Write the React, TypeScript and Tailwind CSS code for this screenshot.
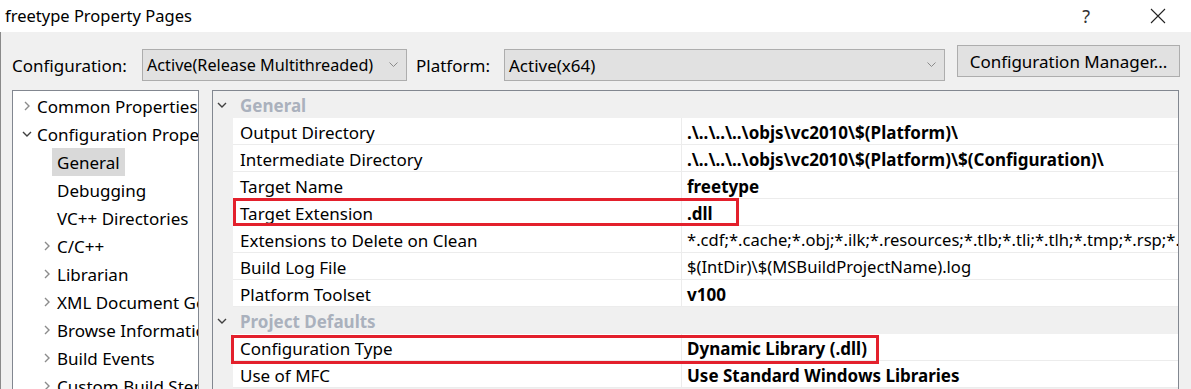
import React from 'react'

const tree = [
  { label: 'Common Properties', level: 0, chev: 'right' },
  { label: 'Configuration Properties', level: 0, chev: 'down' },
  { label: 'General', level: 1, chev: '', selected: true },
  { label: 'Debugging', level: 1, chev: '' },
  { label: 'VC++ Directories', level: 1, chev: '' },
  { label: 'C/C++', level: 1, chev: 'right' },
  { label: 'Librarian', level: 1, chev: 'right' },
  { label: 'XML Document Generator', level: 1, chev: 'right' },
  { label: 'Browse Information', level: 1, chev: 'right' },
  { label: 'Build Events', level: 1, chev: 'right' },
  { label: 'Custom Build Step', level: 1, chev: 'right' },
]

type Row =
  | { header: string }
  | { name: string; value: string; bold?: boolean; box?: 'ext' | 'type' }

const rows: Row[] = [
  { header: 'General' },
  { name: 'Output Directory', value: '.\\..\\..\\..\\objs\\vc2010\\$(Platform)\\', bold: true },
  { name: 'Intermediate Directory', value: '.\\..\\..\\..\\objs\\vc2010\\$(Platform)\\$(Configuration)\\', bold: true },
  { name: 'Target Name', value: 'freetype', bold: true },
  { name: 'Target Extension', value: '.dll', bold: true, box: 'ext' },
  { name: 'Extensions to Delete on Clean', value: '*.cdf;*.cache;*.obj;*.ilk;*.resources;*.tlb;*.tli;*.tlh;*.tmp;*.rsp;*.pgc;*.pgd;*.meta;*.tlog;*.manifest;*.res;*.pch;*.exp;*.idb;*.rep;*.xdc;*.pdb;*_manifest.rc;*.bsc;*.sbr;*.xml;*.metagen;*.bi' },
  { name: 'Build Log File', value: '$(IntDir)\\$(MSBuildProjectName).log' },
  { name: 'Platform Toolset', value: 'v100', bold: true },
  { header: 'Project Defaults' },
  { name: 'Configuration Type', value: 'Dynamic Library (.dll)', bold: true, box: 'type' },
  { name: 'Use of MFC', value: 'Use Standard Windows Libraries', bold: true },
]

function Chevron({ dir }: { dir: string }) {
  return (
    <svg width="10" height="10" viewBox="0 0 10 10" className="shrink-0">
      {dir === 'right' ? (
        <polyline points="3,1 7,5 3,9" fill="none" stroke="#8c8c8c" strokeWidth="1.4" />
      ) : (
        <polyline points="1,3 5,7 9,3" fill="none" stroke="#404040" strokeWidth="1.4" />
      )}
    </svg>
  )
}

function SelectBox({ text, w, size }: { text: string; w: string; size: string }) {
  return (
    <div className={`${w} h-[32px] mt-[4px] flex items-center justify-between bg-[#e1e1e1] border border-[#adadad] pl-[4px] pr-[8px]`}>
      <span className={`pt-[1px] ${size}`}>{text}</span>
      <svg width="9" height="6" viewBox="0 0 9 6">
        <polyline points="0.5,0.5 4.5,4.5 8.5,0.5" fill="none" stroke="#8a8a8a" strokeWidth="1" />
      </svg>
    </div>
  )
}

export default function App() {
  return (
    <div className="w-[1191px] h-[389px] overflow-hidden bg-white text-[17px] text-black font-['Noto_Sans',sans-serif] leading-none">
      {/* title bar */}
      <div className="h-[32px] flex items-center justify-between pl-[5px]">
        <span className="text-[16.5px]">freetype Property Pages</span>
        <div className="flex items-center">
          <span className="text-[18px] text-[#333] mr-[60px]">?</span>
          <svg width="16" height="16" viewBox="0 0 16 16" className="mr-[25px]">
            <path d="M1 1 L15 15 M15 1 L1 15" stroke="#222" strokeWidth="1.1" />
          </svg>
        </div>
      </div>

      <div className="h-[357px] bg-[#f0f0f0] border-l border-[#8a8a8a] flex flex-col">
        {/* toolbar */}
        <div className="flex items-start pl-[11px] pt-[13px]">
          <div className="h-[32px] mt-[4px] flex items-center w-[130px] pt-[1px]">Configuration:</div>
          <SelectBox text="Active(Release Multithreaded)" w="w-[265px]" size="text-[16.2px]" />
          <div className="h-[32px] mt-[4px] flex items-center ml-[9px] w-[88px] pt-[1px]">Platform:</div>
          <SelectBox text="Active(x64)" w="w-[441px]" size="text-[17px]" />
          <div className="ml-[12px] w-[223px] h-[32px] flex items-center justify-center bg-[#e1e1e1] border border-[#adadad] whitespace-nowrap">
            Configuration Manager...
          </div>
        </div>

        {/* panels */}
        <div className="flex mt-[9px] pl-[11px] flex-1 min-h-0">
          {/* tree */}
          <div className="w-[187px] shrink-0 bg-white border border-[#828790] border-b-0 pt-[1px] overflow-hidden">
            {tree.map((t) => (
              <div key={t.label} className="h-[28px] flex items-center whitespace-nowrap">
                {t.level === 0 ? (
                  <div className="w-[24px] shrink-0 pl-[9px] flex">
                    <Chevron dir={t.chev} />
                  </div>
                ) : (
                  <div className="w-[44px] shrink-0 pl-[29px] flex">
                    {t.chev && <Chevron dir={t.chev} />}
                  </div>
                )}
                <span className={t.selected ? 'bg-[#d9d9d9] px-[5px] -ml-[5px] h-[28px] flex items-center pt-[1px]' : 'pt-[1px]'}>
                  {t.label}
                </span>
              </div>
            ))}
          </div>

          {/* property grid */}
          <div className="ml-[13px] w-[967px] shrink-0 border border-[#828790] border-b-0 overflow-hidden">
            {rows.map((r, i) =>
              'header' in r ? (
                <div key={i} className="h-[27px] flex items-center bg-[#f0f0f0]">
                  <div className="w-[20px] shrink-0 pl-[4px] flex">
                    <Chevron dir="down" />
                  </div>
                  <span className="pl-[7px] pt-[1px] font-bold text-[#aab1bd]">{r.header}</span>
                </div>
              ) : (
                <div key={i} className="h-[27px] flex bg-[#f0f0f0]">
                  <div className="w-[20px] shrink-0" />
                  <div className="relative flex flex-1 min-w-0 bg-white border-b border-[#ececec]">
                    <div className="w-[449px] shrink-0 pl-[7px] pt-[2px] flex items-center border-r border-[#ececec] whitespace-nowrap">
                      {r.name}
                    </div>
                    <div className={`pl-[5px] pt-[2px] flex items-center whitespace-nowrap overflow-hidden ${r.bold ? 'font-bold' : 'text-[16.6px]'}`}>
                      {r.value}
                    </div>
                    {r.box === 'ext' && (
                      <div className="absolute z-10 -top-[1px] left-0 w-[506px] h-[28px] border-[3px] border-[#e3202c]" />
                    )}
                    {r.box === 'type' && (
                      <div className="absolute z-10 top-[1px] -left-[2px] w-[648px] h-[29px] border-[3px] border-[#e3202c]" />
                    )}
                  </div>
                </div>
              )
            )}
          </div>
        </div>
      </div>
    </div>
  )
}
